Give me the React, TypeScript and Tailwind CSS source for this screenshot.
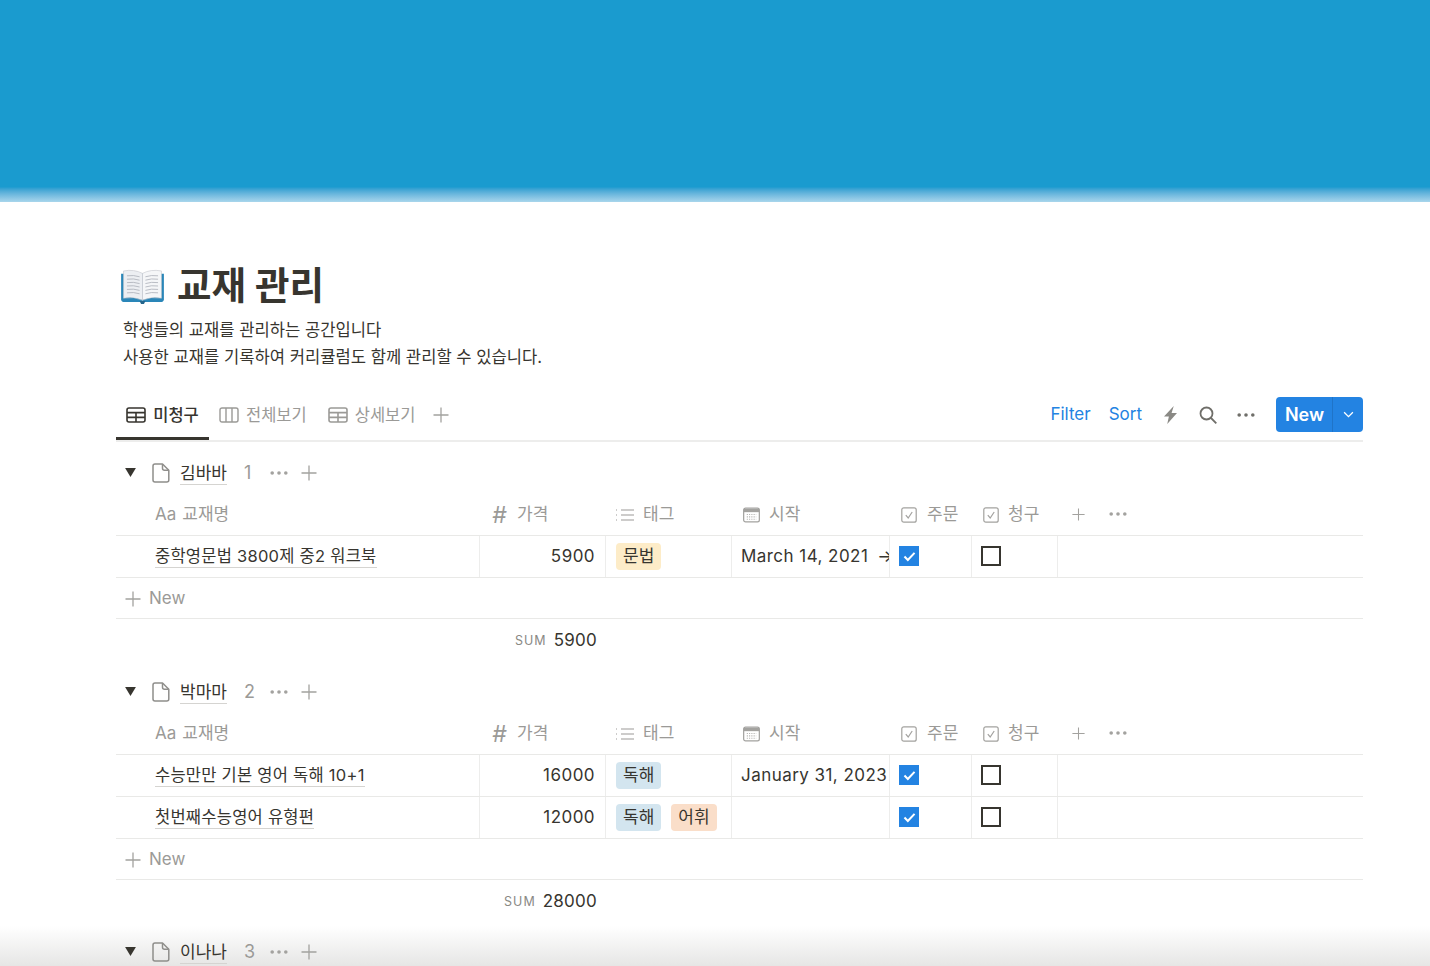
import React from "react";

const FONT = "font-['Inter','Noto_Sans_CJK_KR',sans-serif]";
const GRID = "grid grid-cols-[364px_126px_126px_158px_82px_86px_1fr]";

function TableIcon({ className = "" }: { className?: string }) {
  return (
    <svg viewBox="0 0 20 16" className={`w-[20px] h-[16px] ${className}`} fill="none" stroke="currentColor" strokeWidth="1.6">
      <rect x="1" y="1" width="18" height="14" rx="2" />
      <path d="M1 5.6h18M1 10.4h18M10 5.6V15" />
    </svg>
  );
}
function BoardIcon() {
  return (
    <svg viewBox="0 0 20 16" className="w-[20px] h-[16px]" fill="none" stroke="currentColor" strokeWidth="1.4">
      <rect x="1" y="1" width="18" height="14" rx="2" />
      <path d="M7 1v14M13 1v14" />
    </svg>
  );
}
function Plus({ size = 16, className = "" }: { size?: number; className?: string }) {
  return (
    <svg viewBox="0 0 16 16" width={size} height={size} className={className} fill="none" stroke="currentColor" strokeWidth="1.3">
      <path d="M8 .5v15M.5 8h15" />
    </svg>
  );
}
function Dots({ className = "" }: { className?: string }) {
  return (
    <svg viewBox="0 0 18 4" className={`w-[18px] h-[4px] ${className}`} fill="currentColor">
      <circle cx="2.2" cy="2" r="1.8" />
      <circle cx="9" cy="2" r="1.8" />
      <circle cx="15.8" cy="2" r="1.8" />
    </svg>
  );
}
function PageIcon() {
  return (
    <svg viewBox="0 0 18 20" className="w-[18px] h-[20px] text-[#8f8e8b]" fill="none" stroke="currentColor" strokeWidth="1.5" strokeLinejoin="round">
      <path d="M3 1h7.5L16.8 7.2V17a2 2 0 0 1-2 2H3a2 2 0 0 1-2-2V3a2 2 0 0 1 2-2Z" />
      <path d="M10.5 1v4.2a2 2 0 0 0 2 2h4.3" />
    </svg>
  );
}
function CheckProp() {
  return (
    <svg viewBox="0 0 16 16" className="w-[16px] h-[16px] text-[#a3a29f]" fill="none" stroke="currentColor" strokeWidth="1.2">
      <rect x=".8" y=".8" width="14.4" height="14.4" rx="2" />
      <path d="M4.8 8.2 7.2 11l4-6" />
    </svg>
  );
}
function HeadCell({ icon, label, pl }: { icon: React.ReactNode; label: string; pl: string }) {
  return (
    <div className={`flex items-center h-full pt-[2px] ${pl} text-[#9b9a97] text-[17px]`}>
      {icon}
      <span>{label}</span>
    </div>
  );
}
function Tag({ label, color }: { label: string; color: string }) {
  return <span className={`inline-flex items-center h-[27px] px-[7px] rounded-[4px] text-[#37352f] text-[17px] ${color}`}>{label}</span>;
}
function Checked() {
  return (
    <div className="w-[20px] h-[20px] bg-[#2383e2] flex items-center justify-center">
      <svg viewBox="0 0 14 12" className="w-[13px] h-[11px]" fill="none" stroke="white" strokeWidth="2.2">
        <path d="M1.5 6 5.2 9.8 12.5 2" />
      </svg>
    </div>
  );
}
function Unchecked() {
  return <div className="w-[20px] h-[20px] border-2 border-[#37352f]" />;
}

type Row = { name: string; price: string; tags: { label: string; color: string }[]; date: string; arrow?: boolean };

function TableHeader() {
  return (
    <div className={`${GRID} h-[43px] border-b border-[#e9e9e7] items-center`}>
      <div className="pl-[39px] pt-[2px] text-[#9b9a97] text-[17px] flex items-center gap-[6px]">
        <span>Aa</span>
        <span>교재명</span>
      </div>
      <HeadCell
        pl="pl-[12px]"
        label="가격"
        icon={<span className="text-[#9b9a97] text-[23px] italic w-[25px] leading-none">#</span>}
      />
      <HeadCell
        pl="pl-[10px]"
        label="태그"
        icon={
          <svg viewBox="0 0 18 14" className="w-[18px] h-[14px] mr-[9px]" fill="none" stroke="currentColor" strokeWidth="1.2">
            <path d="M5 2h13M5 7h13M5 12h13" />
            <path d="M0 2h2M0 7h2M0 12h2" strokeDasharray="1 1" />
          </svg>
        }
      />
      <HeadCell
        pl="pl-[11px]"
        label="시작"
        icon={
          <svg viewBox="0 0 18 16" className="w-[17px] h-[16px] mr-[9px]" fill="none">
            <rect x=".7" y=".7" width="16.6" height="14.6" rx="2" stroke="#a3a29f" strokeWidth="1.3" />
            <path d="M1 1.5h16V5H1z" fill="#a3a29f" />
            <path d="M4 7.5h10M4 10h10M4 12.5h10" stroke="#b5b4b1" strokeWidth="1.1" strokeDasharray="1.2 1.2" />
          </svg>
        }
      />
      <HeadCell pl="pl-[11px]" label="주문" icon={<span className="mr-[10px] flex"><CheckProp /></span>} />
      <HeadCell pl="pl-[11px]" label="청구" icon={<span className="mr-[9px] flex"><CheckProp /></span>} />
      <div className="flex items-center gap-[24px] pl-[14px] text-[#a3a29f]">
        <Plus size={13} />
        <Dots className="w-[16px]" />
      </div>
    </div>
  );
}

function DataRow({ row }: { row: Row }) {
  const cell = "h-full border-r border-[#ededec] flex items-center";
  const num = "tracking-[0.45px]";
  return (
    <div className={`${GRID} h-[42px] border-b border-[#e9e9e7] text-[#37352f] text-[17px]`}>
      <div className={`${cell} pl-[39px]`}>
        <span className="border-b border-[#d5d4d1] leading-[21px] text-[16.5px] tracking-[0.25px]">{row.name}</span>
      </div>
      <div className={`${cell} ${num} justify-end pr-[10px] pt-[1px]`}>{row.price}</div>
      <div className={`${cell} pl-[10px] gap-[10px]`}>
        {row.tags.map((t) => (
          <Tag key={t.label} label={t.label} color={t.color} />
        ))}
      </div>
      <div className={`${cell} ${num} pl-[9px] pt-[1px] overflow-hidden whitespace-nowrap`}>
        {row.date}
        {row.arrow && <span className="ml-[9px]">→</span>}
      </div>
      <div className={`${cell} pl-[9px] pb-[1px]`}><Checked /></div>
      <div className={`${cell} pl-[9px] pb-[1px]`}><Unchecked /></div>
      <div />
    </div>
  );
}

function GroupHeader({ name, count }: { name: string; count: string }) {
  return (
    <div className="h-[41px] flex items-center pl-[9px]">
      <svg viewBox="0 0 12 10" className="w-[11px] h-[9px] text-[#37352f]" fill="currentColor">
        <path d="M0 0h12L6 10z" />
      </svg>
      <span className="ml-[16px] flex"><PageIcon /></span>
      <span className="ml-[10px] text-[17px] text-[#37352f] border-b border-[#d5d4d1] leading-[22px] pt-[1px]">{name}</span>
      <span className="ml-[17px] w-[26px] text-[18px] text-[#9b9a97]">{count}</span>
      <Dots className="text-[#a3a29f]" />
      <Plus className="ml-[13px] text-[#a3a29f]" />
    </div>
  );
}

function Group({ name, count, rows, sum }: { name: string; count: string; rows: Row[]; sum: string }) {
  return (
    <div>
      <GroupHeader name={name} count={count} />
      <TableHeader />
      {rows.map((r) => (
        <DataRow key={r.name} row={r} />
      ))}
      <div className="h-[41px] pt-[1px] border-b border-[#e9e9e7] flex items-center pl-[9px] text-[#9b9a97] text-[17px] gap-[8px]">
        <Plus className="text-[#a3a29f]" />
        <span>New</span>
      </div>
      <div className="h-[42px] w-[481px] pt-[2px] flex items-center justify-end gap-[7px]">
        <span className="text-[12.5px] tracking-[1px] text-[#8a8985]">SUM</span>
        <span className="text-[17px] tracking-[0.25px] text-[#37352f]">{sum}</span>
      </div>
    </div>
  );
}

function BookEmoji() {
  return (
    <svg viewBox="0 0 44 36" className="w-[43px] h-[35px]">
      <path d="M0 5h22v29H4q-4 0-4-3z" fill="#2a86b8" />
      <path d="M44 5H22v29h18q4 0 4-3z" fill="#2a86b8" />
      <path d="M19 33h6l-1.5 3h-3z" fill="#24658c" />
      <path d="M2.5 2q11-2 19.5 2.5V32q-9-4-19.5-2z" fill="#eceef2" stroke="#c2c5cc" strokeWidth=".6" />
      <path d="M41.5 2q-11-2-19.5 2.5V32q9-4 19.5-2z" fill="#f5f6f8" stroke="#c2c5cc" strokeWidth=".6" />
      <path d="M6 7q7-1 13 1M6 10.5q7-1 13 1M6 14q7-1 13 1M6 17.5q7-1 13 1M6 21q7-1 13 1M6 24.5q7-1 13 1M38 7q-7-1-13 1M38 10.5q-7-1-13 1M38 14q-7-1-13 1M38 17.5q-7-1-13 1M38 21q-7-1-13 1M38 24.5q-7-1-13 1" stroke="#a9adb5" strokeWidth=".8" fill="none" />
    </svg>
  );
}

export default function App() {
  const t1 = "bg-[#fdecc8]";
  const t2 = "bg-[#d3e5ef]";
  const t3 = "bg-[#fadec9]";
  return (
    <div className={`${FONT} relative w-[1430px] h-[966px] overflow-hidden bg-white`}>
      <div className="absolute left-0 right-0 bottom-0 h-[40px] bg-gradient-to-b from-transparent to-[#e6e6e5]" />

      <div className="relative h-[202px] flex flex-col">
        <div className="h-[187px] bg-[#1a9bcf]" />
        <div className="h-[15px] bg-gradient-to-b from-[#1a9bcf] to-[#a9d6ec]" />
      </div>

      <div className="relative w-[1247px] ml-[116px]">
        <div className="mt-[61px] h-[46px] flex items-center pl-[5px] gap-[13px]">
          <BookEmoji />
          <h1 className="text-[37.5px] font-bold text-[#37352f] leading-none">교재 관리</h1>
        </div>
        <div className="mt-[8px] pl-[7px] text-[16.6px] leading-[27px] text-[#37352f]">
          <p>학생들의 교재를 관리하는 공간입니다</p>
          <p>사용한 교재를 기록하여 커리큘럼도 함께 관리할 수 있습니다.</p>
        </div>

        <div className="mt-[26px] h-[45px] border-b-2 border-[#ededec] flex justify-between">
          <div className="flex items-start text-[16.5px] text-[#9b9a97]">
            <div className="w-[93px] h-[43px] pb-[4px] border-b-[3px] border-[#37352f] flex items-center justify-center gap-[7px] text-[#37352f] font-medium">
              <TableIcon />
              <span>미청구</span>
            </div>
            <div className="ml-[10px] h-[36px] flex items-center gap-[7px]">
              <BoardIcon />
              <span>전체보기</span>
            </div>
            <div className="ml-[21px] h-[36px] flex items-center gap-[7px]">
              <TableIcon />
              <span>상세보기</span>
            </div>
            <div className="ml-[18px] h-[36px] flex items-center text-[#a3a29f]">
              <Plus />
            </div>
          </div>
          <div className="flex items-start">
            <div className="h-[35px] pt-[1px] flex items-center text-[17px] text-[#2383e2] gap-[18px]">
              <span>Filter</span>
              <span>Sort</span>
            </div>
            <div className="h-[35px] ml-[22px] flex items-center text-[#8a8985]">
              <svg viewBox="0 0 12 18" className="w-[13px] h-[18px]" fill="currentColor" preserveAspectRatio="none">
                <path d="M9 0 0 10.5h4.5L3 18l9-11H7z" />
              </svg>
            </div>
            <div className="h-[35px] ml-[22px] flex items-center text-[#6f6e69]">
              <svg viewBox="0 0 18 18" className="w-[18px] h-[18px]" fill="none" stroke="currentColor" strokeWidth="1.8">
                <circle cx="7.5" cy="7.5" r="6" />
                <path d="m12 12 5.3 5.3" />
              </svg>
            </div>
            <div className="h-[35px] ml-[20px] flex items-center text-[#6f6e69]">
              <Dots />
            </div>
            <div className="ml-[21px] w-[87px] h-[35px] bg-[#2383e2] rounded-[4px] flex text-white">
              <div className="w-[57px] pl-[1px] border-r border-[#1f74c8] flex items-center justify-center text-[18px] font-semibold">New</div>
              <div className="flex-1 flex items-center justify-center">
                <svg viewBox="0 0 12 8" className="w-[11px] h-[7px]" fill="none" stroke="currentColor" strokeWidth="1.5">
                  <path d="m1 1.5 5 5 5-5" />
                </svg>
              </div>
            </div>
          </div>
        </div>

        <div className="mt-[10px] flex flex-col gap-[9px]">
          <div className="mb-[1px]">
            <Group
              name="김바바"
              count="1"
              sum="5900"
              rows={[{ name: "중학영문법 3800제 중2 워크북", price: "5900", tags: [{ label: "문법", color: t1 }], date: "March 14, 2021", arrow: true }]}
            />
          </div>
          <Group
            name="박마마"
            count="2"
            sum="28000"
            rows={[
              { name: "수능만만 기본 영어 독해 10+1", price: "16000", tags: [{ label: "독해", color: t2 }], date: "January 31, 2023" },
              { name: "첫번째수능영어 유형편", price: "12000", tags: [{ label: "독해", color: t2 }, { label: "어휘", color: t3 }], date: "" },
            ]}
          />
          <GroupHeader name="이나나" count="3" />
        </div>
      </div>
    </div>
  );
}
